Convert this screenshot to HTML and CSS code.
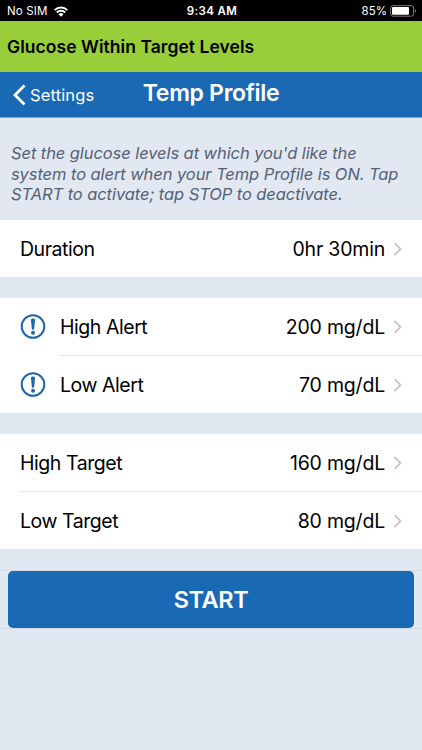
FILE: index.html
```html
<!DOCTYPE html>
<html lang="en">
<head>
  <meta charset="UTF-8">
  <meta name="viewport" content="width=device-width, initial-scale=1.0">
  <title>Temp Profile</title>
  <link rel="stylesheet" href="styles.css">
</head>
<body>
  <div class="status-bar">
    <div class="carrier">
      <span>No SIM</span>
      <svg class="wifi" width="14" height="11" viewBox="0 0 14 11">
        <path d="M0.7 4.1A8.9 8.9 0 0 1 13.3 4.1M2.8 6.5A5.9 5.9 0 0 1 11.2 6.5" fill="none" stroke="#fff" stroke-width="1.9"/>
        <path d="M4.5 8.2A3.5 3.5 0 0 1 9.5 8.2L7 10.8Z" fill="#fff"/>
      </svg>
    </div>
    <div class="clock">9:34 AM</div>
    <div class="power">
      <span>85%</span>
      <svg width="27" height="12" viewBox="0 0 27 12">
        <rect x="0.6" y="0.6" width="23" height="10.6" rx="2.4" fill="none" stroke="#777" stroke-width="1"/>
        <rect x="2" y="2" width="17" height="7.8" rx="1" fill="#fff"/>
        <path d="M24.8 4.2Q26.3 4.6 26.3 5.9T24.8 7.6Z" fill="#777"/>
      </svg>
    </div>
  </div>

  <div class="banner">Glucose Within Target Levels</div>

  <div class="nav">
    <a class="back">
      <svg width="14" height="22" viewBox="0 0 14 22"><path d="M12.5 1.5L3 11L12.5 20.5" fill="none" stroke="#fff" stroke-width="2.8"/></svg>
      <span>Settings</span>
    </a>
    <h1>Temp Profile</h1>
  </div>

  <p class="intro">
    Set the glucose levels at which you'd like the<br>
    system to alert when your Temp Profile is ON. Tap<br>
    START to activate; tap STOP to deactivate.
  </p>

  <div class="group">
    <div class="row">
      <span class="label">Duration</span>
      <span class="value">0hr 30min</span>
      <svg class="chevron" width="9" height="14" viewBox="0 0 9 14"><path d="M1.5 1L7.5 7L1.5 13"/></svg>
    </div>
  </div>

  <div class="group alerts">
    <div class="row">
      <svg class="alert-icon" width="26" height="26" viewBox="0 0 26 26">
        <circle cx="13" cy="12.5" r="11.3"/>
        <path d="M10.9 5.9Q10.9 4.5 13 4.5T15.1 5.9L14.1 15.2Q13 16.3 11.9 15.2Z"/>
        <circle class="dot" cx="13" cy="18.8" r="2"/>
      </svg>
      <span class="label">High Alert</span>
      <span class="value">200 mg/dL</span>
      <svg class="chevron" width="9" height="14" viewBox="0 0 9 14"><path d="M1.5 1L7.5 7L1.5 13"/></svg>
    </div>
    <div class="row">
      <svg class="alert-icon" width="26" height="26" viewBox="0 0 26 26">
        <circle cx="13" cy="12.5" r="11.3"/>
        <path d="M10.9 5.9Q10.9 4.5 13 4.5T15.1 5.9L14.1 15.2Q13 16.3 11.9 15.2Z"/>
        <circle class="dot" cx="13" cy="18.8" r="2"/>
      </svg>
      <span class="label">Low Alert</span>
      <span class="value">70 mg/dL</span>
      <svg class="chevron" width="9" height="14" viewBox="0 0 9 14"><path d="M1.5 1L7.5 7L1.5 13"/></svg>
    </div>
  </div>

  <div class="group targets">
    <div class="row">
      <span class="label">High Target</span>
      <span class="value">160 mg/dL</span>
      <svg class="chevron" width="9" height="14" viewBox="0 0 9 14"><path d="M1.5 1L7.5 7L1.5 13"/></svg>
    </div>
    <div class="row">
      <span class="label">Low Target</span>
      <span class="value">80 mg/dL</span>
      <svg class="chevron" width="9" height="14" viewBox="0 0 9 14"><path d="M1.5 1L7.5 7L1.5 13"/></svg>
    </div>
  </div>

  <div class="action">
    <button class="start">START</button>
  </div>
</body>
</html>
```

FILE: styles.css
```css
* {
  box-sizing: border-box;
}
body {
  font-family: Inter, "Liberation Sans", sans-serif;
  background: #e1e8f2;
  color: #000;
  margin: 0;
  height: 750px;
  overflow: hidden;
}
svg {
  display: block;
  flex: none;
}
.status-bar {
  display: grid;
  grid-template-columns: 1fr auto 1fr;
  align-items: center;
  height: 21px;
  padding: 1px 5px 0 7px;
  background: #000;
  color: #fff;
  font-size: 11.5px;
}
.carrier,
.power {
  display: flex;
  align-items: center;
  gap: 6px;
}
.carrier {
  letter-spacing: 0.15px;
}
.power {
  justify-content: flex-end;
  gap: 3px;
}
.clock {
  font-weight: 600;
  letter-spacing: 0.35px;
}
.banner {
  display: flex;
  align-items: center;
  height: 51px;
  padding-left: 7px;
  background: #97ce39;
  font-size: 17.5px;
  font-weight: 600;
  letter-spacing: 0.05px;
}
.nav {
  display: grid;
  grid-template-columns: 1fr auto 1fr;
  height: 46px;
  padding: 0 12px;
  background: #1a69b5;
  border-bottom: 1px solid #7ea8d3;
  color: #fff;
}
.back {
  display: flex;
  align-items: center;
  gap: 4px;
  font-size: 16.5px;
  letter-spacing: 0.15px;
}
h1 {
  margin: 0;
  font-size: 23px;
  font-weight: 600;
  line-height: 43px;
  letter-spacing: -0.3px;
}
.intro {
  margin: 0;
  height: 102px;
  padding: 25px 0 0 11px;
  color: #566074;
  font-size: 16.5px;
  font-style: italic;
  line-height: 20.5px;
  letter-spacing: -0.08px;
  white-space: nowrap;
}
.group {
  margin-bottom: 21px;
  background: #fff;
}
.row {
  display: flex;
  align-items: center;
  height: 57px;
  padding-right: 20px;
  margin-left: 20px;
  font-size: 19.5px;
}
.alerts .row,
.targets .row {
  height: 58px;
}
.alerts .row:last-child,
.targets .row:last-child {
  height: 57px;
}
.targets .row:first-child {
  border-bottom: 1px solid #e8e8ea;
}
/* divider starts at the label, not under the icon */
.alerts .row:first-child {
  background: linear-gradient(#e3e3e5, #e3e3e5) 40px 100% / 100% 1px no-repeat;
}
.alert-icon {
  margin-right: 14px;
  fill: #1e67ad;
}
.alert-icon circle {
  fill: none;
  stroke: #1e67ad;
  stroke-width: 2;
}
.alert-icon .dot {
  fill: #1e67ad;
  stroke: none;
}
.label {
  letter-spacing: -0.45px;
}
.value {
  margin-left: auto;
  letter-spacing: -0.2px;
}
.chevron {
  margin-left: 8px;
  fill: none;
  stroke: #c5c5ca;
  stroke-width: 1.8;
}
.action {
  padding: 0 8px;
  border-top: 1px solid #d5dce6;
  border-bottom: 1px solid #d5dce6;
}
.start {
  display: block;
  width: 100%;
  height: 57px;
  border: none;
  border-radius: 5px;
  background: #1a69b5;
  color: #fff;
  font-family: inherit;
  font-size: 23.5px;
  font-weight: 600;
  letter-spacing: -0.4px;
}
```
